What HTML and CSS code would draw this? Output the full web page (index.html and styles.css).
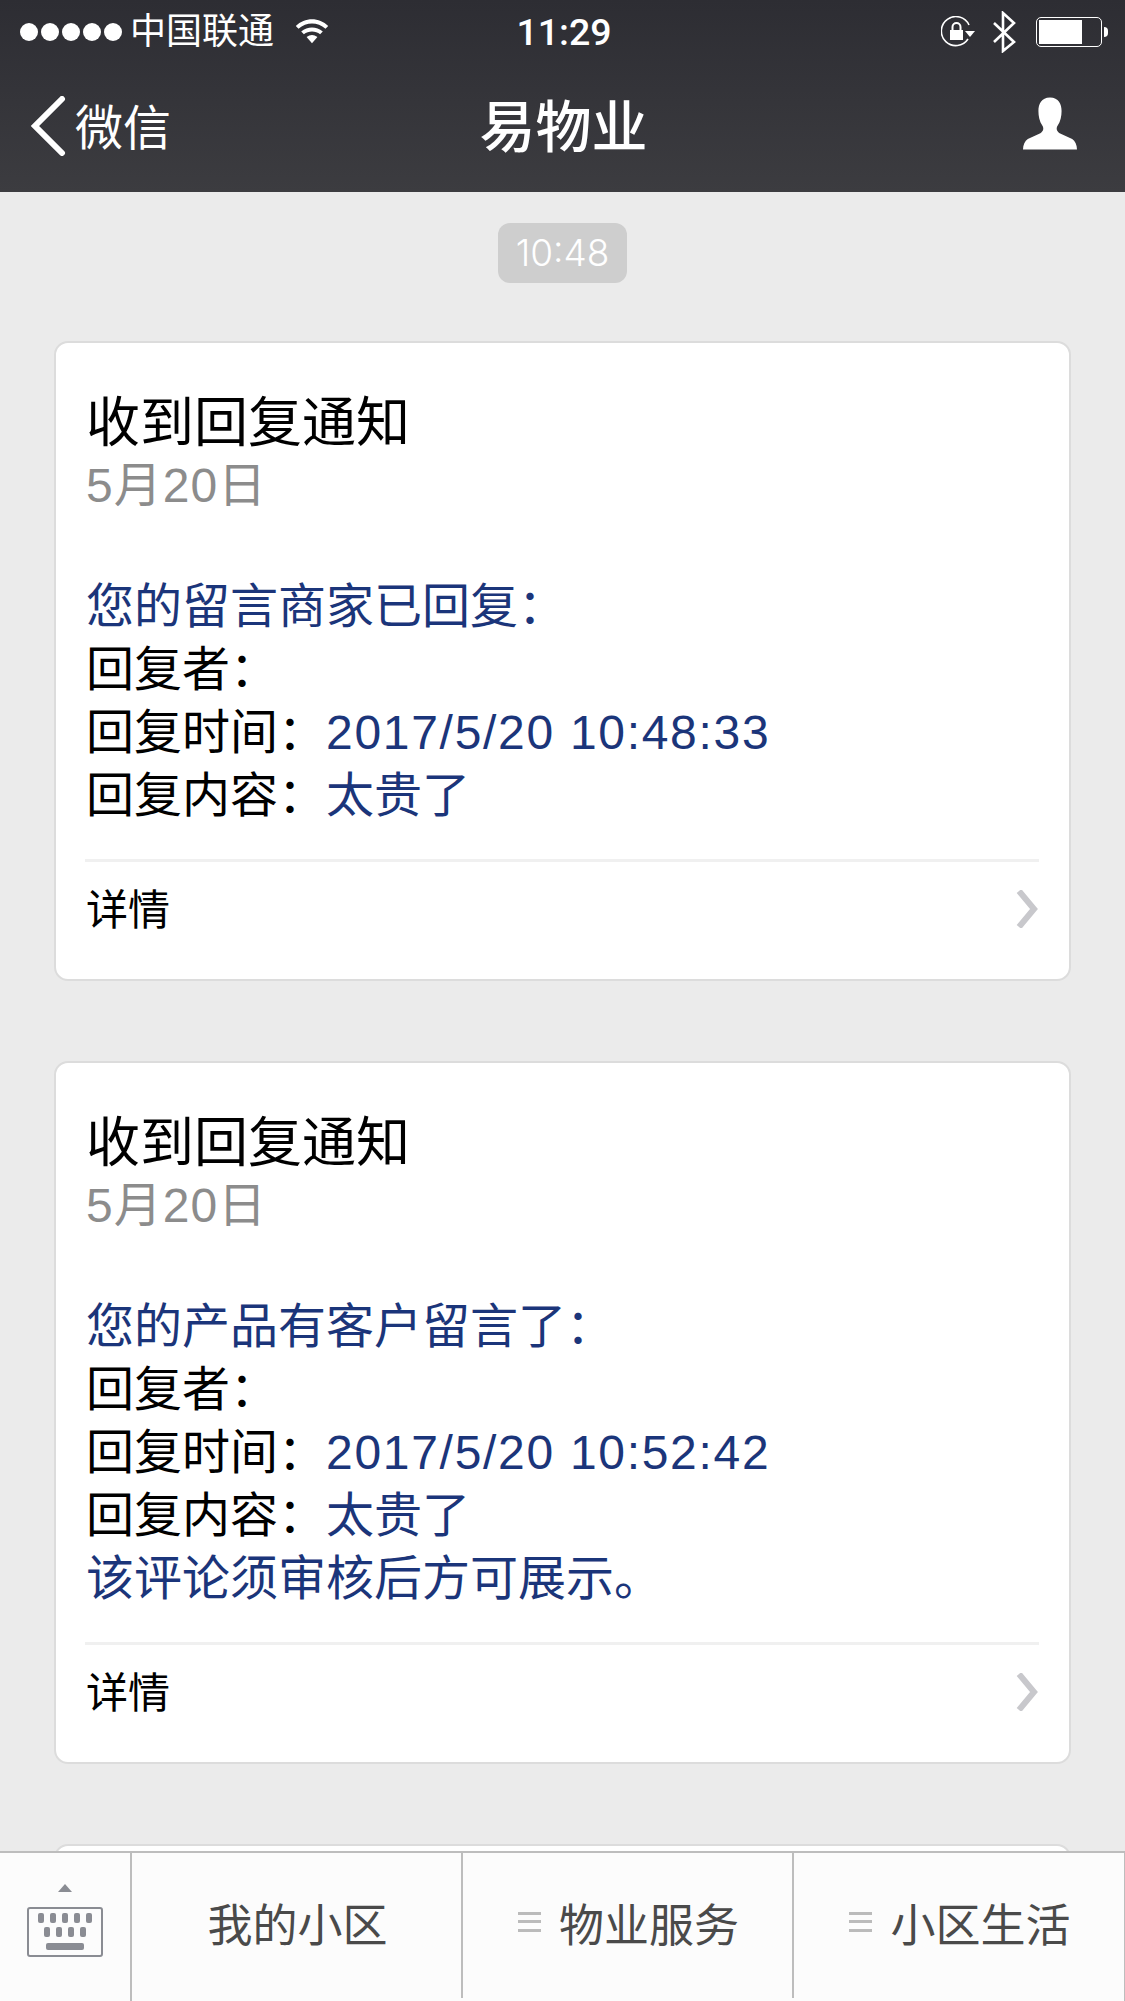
FILE: index.html
```html
<!DOCTYPE html>
<html lang="zh-CN">
<head>
    <meta charset="UTF-8">
    <meta name="viewport" content="width=device-width, initial-scale=1.0">
    <title>易物业</title>
    <link rel="stylesheet" href="styles.css">
</head>
<body>
    <header class="top">
        <div class="status-bar">
            <div class="status-left">
                <span class="signal"><i></i><i></i><i></i><i></i><i></i></span>
                <span class="carrier">中国联通</span>
                <svg class="wifi" width="36" height="27" viewBox="0 0 38 30">
                    <path d="M1 9C11-1 27-1 37 9l-3 3C25 4 13 4 4 12z" fill="#fff"/>
                    <path d="M7 15c7-6 17-6 24 0l-3 3c-5-4-13-4-18 0z" fill="#fff"/>
                    <path d="M13 21c4-3 8-3 12 0l-6 7z" fill="#fff"/>
                </svg>
            </div>
            <div class="clock">11:29</div>
            <div class="status-right">
                <svg class="lock" width="34" height="32" viewBox="0 0 34 32">
                    <path d="M27 23A14.5 14.5 0 1 1 28 9" fill="none" stroke="#fff" stroke-width="1.6"/>
                    <path d="M24 15h10l-5 6z" fill="#fff"/>
                    <rect x="9" y="14" width="13" height="10" fill="#fff"/>
                    <path d="M11.5 14v-3a4 4 0 0 1 8 0v3" fill="none" stroke="#fff" stroke-width="2"/>
                </svg>
                <svg class="bluetooth" width="24" height="42" viewBox="0 0 24 42">
                    <path d="M2 12l20 19L11 40V2l11 10L2 31" fill="none" stroke="#fff" stroke-width="2.6"/>
                </svg>
                <div class="battery"><div class="battery-level"></div></div>
                <div class="battery-tip"></div>
            </div>
        </div>
        <nav class="nav-bar">
            <a class="back" href="#">
                <svg width="36" height="60" viewBox="0 0 36 60">
                    <path d="M32 3L5 30l27 27" fill="none" stroke="#fff" stroke-width="6" stroke-linecap="round"/>
                </svg>
                <span>微信</span>
            </a>
            <h1>易物业</h1>
            <svg class="profile" width="54" height="53" viewBox="0 0 56 54">
                <path d="M28 0c-9 0-12 7-12 14 0 5 1 11 4 15 2 3 1 6-2 8L5 43c-3 2-5 6-5 11h56c0-5-2-9-5-11l-13-6c-3-2-4-5-2-8 3-4 4-10 4-15 0-7-3-14-12-14z" fill="#fff"/>
            </svg>
        </nav>
    </header>

    <main class="feed">
        <div class="time-row"><span class="time-pill">10:48</span></div>

        <section class="card">
            <h2>收到回复通知</h2>
            <p class="date">5月20日</p>
            <div class="lines">
                <p class="blue">您的留言商家已回复：</p>
                <p>回复者：</p>
                <p>回复时间：<span class="blue num">2017/5/20 10:48:33</span></p>
                <p>回复内容：<span class="blue">太贵了</span></p>
            </div>
            <div class="detail">
                <span>详情</span>
                <svg width="26" height="38" viewBox="0 0 26 38">
                    <path d="M6 1l15 18L6 37" fill="none" stroke="#c8c8cc" stroke-width="6"/>
                </svg>
            </div>
        </section>

        <section class="card">
            <h2>收到回复通知</h2>
            <p class="date">5月20日</p>
            <div class="lines">
                <p class="blue">您的产品有客户留言了：</p>
                <p>回复者：</p>
                <p>回复时间：<span class="blue num">2017/5/20 10:52:42</span></p>
                <p>回复内容：<span class="blue">太贵了</span></p>
                <p class="blue">该评论须审核后方可展示。</p>
            </div>
            <div class="detail">
                <span>详情</span>
                <svg width="26" height="38" viewBox="0 0 26 38">
                    <path d="M6 1l15 18L6 37" fill="none" stroke="#c8c8cc" stroke-width="6"/>
                </svg>
            </div>
        </section>

        <section class="card card-next"></section>
    </main>

    <footer class="tabs">
        <div class="tab tab-keyboard">
            <svg width="76" height="73" viewBox="0 0 76 73">
                <path d="M38 0l7 8H31z" fill="#8a8c93"/>
                <rect x="1" y="24" width="74" height="48" rx="2" fill="none" stroke="#8a8c93" stroke-width="2"/>
                <g fill="#8a8c93">
                    <rect x="11" y="29" width="6" height="10" rx="2"/>
                    <rect x="23" y="29" width="6" height="10" rx="2"/>
                    <rect x="35" y="29" width="6" height="10" rx="2"/>
                    <rect x="47" y="29" width="6" height="10" rx="2"/>
                    <rect x="59" y="29" width="6" height="10" rx="2"/>
                    <rect x="17" y="43" width="6" height="10" rx="2"/>
                    <rect x="29" y="43" width="6" height="10" rx="2"/>
                    <rect x="41" y="43" width="6" height="10" rx="2"/>
                    <rect x="53" y="43" width="6" height="10" rx="2"/>
                    <rect x="19" y="59" width="38" height="7" rx="2"/>
                </g>
            </svg>
        </div>
        <div class="tab tab-short">我的小区</div>
        <div class="tab tab-short"><span class="menu-mark"></span>物业服务</div>
        <div class="tab"><span class="menu-mark"></span>小区生活</div>
    </footer>
</body>
</html>
```

FILE: styles.css
```css
* {
    box-sizing: border-box;
}
html, body {
    height: 2001px;
}
body {
    margin: 0;
    display: flex;
    flex-direction: column;
    overflow: hidden;
    background-color: #ebebeb;
    color: #000;
    font-family: "Liberation Sans", "Noto Sans CJK SC", sans-serif;
}
p, h1, h2 {
    margin: 0;
    font-weight: normal;
}

/* top bar */
.top {
    height: 192px;
    flex: none;
    color: #fff;
    background: linear-gradient(#2d2d33, #3c3c40);
}
.status-bar {
    height: 60px;
    padding: 3px 17px 0 20px;
    display: grid;
    grid-template-columns: 1fr auto 1fr;
    align-items: center;
}
.status-left {
    display: flex;
    align-items: center;
}
.signal {
    display: flex;
    gap: 3px;
}
.signal i {
    width: 18px;
    height: 18px;
    border-radius: 50%;
    background-color: #fff;
}
.carrier {
    margin-left: 8px;
    font-size: 36px;
    line-height: 40px;
}
.wifi {
    margin-left: 20px;
    margin-top: -1px;
}
.clock {
    font-family: Roboto, sans-serif;
    font-size: 37.5px;
    font-weight: 500;
}
.status-right {
    display: flex;
    align-items: center;
    justify-content: flex-end;
}
.bluetooth {
    margin-left: 17px;
}
.battery {
    width: 66px;
    height: 30px;
    margin-left: 20px;
    padding: 2px;
    border: 1px solid #fff;
    border-radius: 5px;
}
.battery-level {
    width: 43px;
    height: 100%;
    background-color: #fff;
}
.battery-tip {
    width: 4px;
    height: 10px;
    margin-left: 2px;
    border-radius: 0 4px 4px 0;
    background-color: #fff;
}
.nav-bar {
    height: 132px;
    padding: 0 48px 0 30px;
    display: flex;
    align-items: center;
    justify-content: space-between;
    position: relative;
}
.back {
    display: flex;
    align-items: center;
    gap: 9px;
    color: #fff;
    text-decoration: none;
    font-size: 48px;
    line-height: 56px;
}
.back span {
    margin-top: 6px;
}
.nav-bar h1 {
    position: absolute;
    left: 2px;
    right: 0;
    top: 33px;
    text-align: center;
    font-size: 56px;
    line-height: 70px;
    font-weight: 500;
}
.profile {
    margin-top: -6px;
}

/* messages */
.feed {
    flex: 1;
    min-height: 0;
    overflow: hidden;
    padding: 31px 54px 0;
}
.time-row {
    text-align: center;
    margin-bottom: 58px;
}
.time-pill {
    display: inline-block;
    width: 129px;
    height: 60px;
    border-radius: 12px;
    background-color: #cecece;
    color: #fff;
    font-family: Inter, sans-serif;
    font-weight: 300;
    font-size: 37px;
    line-height: 60px;
}
.card {
    background-color: white;
    border: 2px solid #dcdcdc;
    border-radius: 14px;
    padding: 44px 30px 0;
    margin-bottom: 80px;
}
.card-next {
    height: 300px;
}
.card h2 {
    font-size: 54px;
    line-height: 72px;
}
.date {
    color: #8c8c8c;
    font-size: 48px;
    line-height: 54px;
    letter-spacing: 1px;
}
.lines {
    margin-top: 62px;
    padding-bottom: 32px;
    font-size: 48px;
    line-height: 63px;
}
.blue {
    color: #1b357a;
}
.num {
    letter-spacing: 1.7px;
}
.detail {
    height: 120px;
    padding: 0 0 24px 1px;
    display: flex;
    align-items: center;
    justify-content: space-between;
    border-top: 3px solid #f0f0f0;
    font-size: 42px;
    margin-left: -1px;
}
.detail span {
    margin-top: -4px;
}

/* bottom menu */
.tabs {
    height: 150px;
    flex: none;
    display: grid;
    grid-template-columns: 132px 331px 331px 1fr;
    background-color: #fcfcfc;
    border-top: 2px solid #bdbdbd;
    border-right: 1px solid #bdbdbd;
    color: #4a4a4a;
    font-size: 45px;
}
.tab {
    display: flex;
    align-items: center;
    justify-content: center;
    padding: 0 0 10px 2px;
    border-right: 2px solid #bdbdbd;
}
.tab:last-child {
    border-right: none;
}
.tab-short {
    margin-bottom: 3px;
    padding-bottom: 7px;
}
.tab-keyboard {
    padding: 0 0 14px;
}
.menu-mark {
    width: 23px;
    height: 20px;
    margin-right: 18px;
    border-top: 3px solid #bbb;
    border-bottom: 3px solid #bbb;
    position: relative;
}
.menu-mark::after {
    content: "";
    position: absolute;
    left: 0;
    right: 0;
    top: 5px;
    height: 3px;
    background-color: #bbb;
}
```
